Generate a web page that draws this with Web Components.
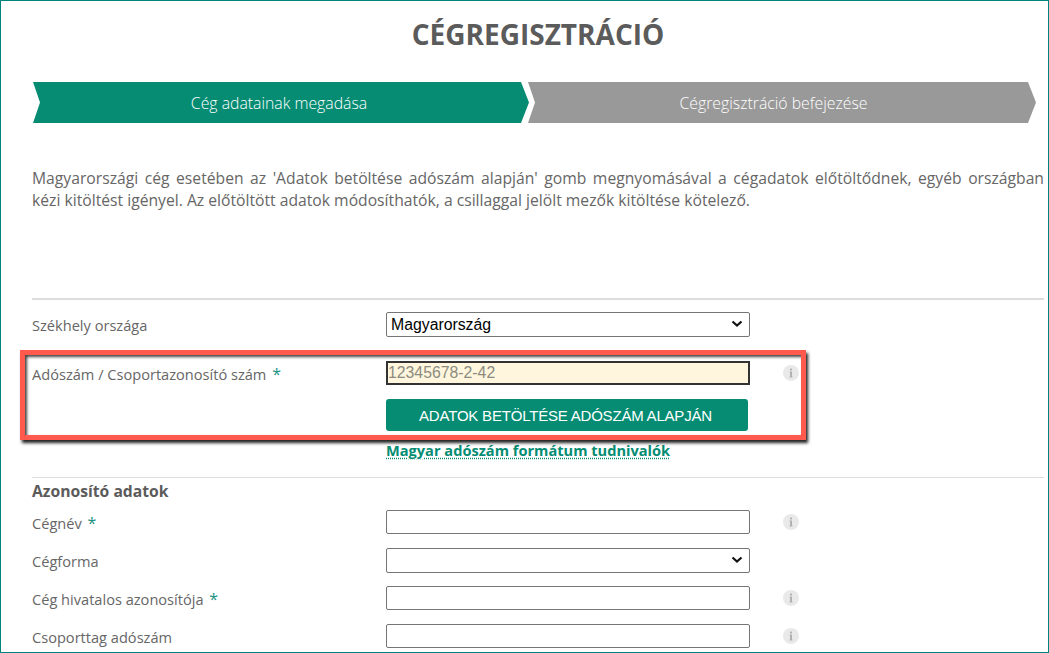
<!DOCTYPE html>
<html lang="hu">
<head>
<meta charset="utf-8">
<title>Cégregisztráció</title>
<style>
  html, body { margin: 0; padding: 0; background: #fff; }
  body { font-family: "Open Sans", "Liberation Sans", sans-serif; color: #666; }
</style>
</head>
<body>

<reg-page>
  <reg-steps>
    <reg-step active>Cég adatainak megadása</reg-step>
    <reg-step>Cégregisztráció befejezése</reg-step>
  </reg-steps>

  <p slot="intro">Magyarországi cég esetében az 'Adatok betöltése adószám alapján' gomb megnyomásával a cégadatok előtöltődnek, egyéb országban kézi&nbsp;kitöltést igényel. Az előtöltött adatok módosíthatók, a csillaggal jelölt mezők kitöltése kötelező.</p>

  <form-row tall label="Székhely országa" type="select" value="Magyarország"></form-row>
  <form-row label="Adószám / Csoportazonosító szám" required type="tax" value="12345678-2-42" info></form-row>
  <tax-actions></tax-actions>
  <form-section>Azonosító adatok</form-section>
  <form-row label="Cégnév" required info></form-row>
  <form-row label="Cégforma" type="select"></form-row>
  <form-row label="Cég hivatalos azonosítója" required info></form-row>
  <form-row label="Csoporttag adószám" info></form-row>

  <red-highlight></red-highlight>
</reg-page>

<script>
// Page frame with the title and the intro text
class RegPage extends HTMLElement {
  constructor() {
    super();
    this.attachShadow({ mode: 'open' });
    this.shadowRoot.innerHTML = `
      <style>
        :host {
          display: block;
          position: relative;
          box-sizing: border-box;
          height: 653px;
          padding: 0 4px 0 31px;
          border: 1px solid #00857c;
          overflow: hidden;
        }
        h1 {
          margin: 0;
          padding-top: 15px;
          font-size: 28px;
          line-height: 36px;
          font-weight: 700;
          text-align: center;
          color: #5b5b5b;
        }
        .intro { display: block; height: 175px; border-bottom: 2px solid #ddd; margin-bottom: 12px; }
        ::slotted(p) {
          margin: 0;
          padding-top: 44px;
          font-size: 15.7px;
          line-height: 22px;
          text-align: justify;
          color: #666;
        }
      </style>
      <h1>CÉGREGISZTRÁCIÓ</h1>
      <slot name="steps"></slot>
      <div class="intro"><slot name="intro"></slot></div>
      <slot></slot>
    `;
  }
}

class RegSteps extends HTMLElement {
  constructor() {
    super();
    this.attachShadow({ mode: 'open' });
    this.shadowRoot.innerHTML = `
      <style>
        :host {
          display: flex;
          margin: 30px 8px 0 1px;
          height: 41px;
        }
      </style>
      <slot></slot>
    `;
  }
  connectedCallback() {
    this.slot = 'steps';
  }
}

class RegStep extends HTMLElement {
  constructor() {
    super();
    this.attachShadow({ mode: 'open' });
    this.shadowRoot.innerHTML = `
      <style>
        :host {
          display: flex;
          flex: 1 1 0;
          align-items: center;
          justify-content: center;
          box-sizing: border-box;
          height: 41px;
          padding-right: 17px;
          font-size: 15.8px;
          font-weight: 300;
          color: #fff;
          background: #999;
          clip-path: polygon(0 0, calc(100% - 8px) 0, 100% 50%, calc(100% - 8px) 100%, 0 100%, 7px 50%);
        }
        :host([active]) {
          flex: 0 0 496px;
          margin-right: -1px;
          padding-right: 4px;
          background: #058c73;
        }
      </style>
      <slot></slot>
    `;
  }
}

// label + control + optional info mark
class FormRow extends HTMLElement {
  constructor() {
    super();
    this.attachShadow({ mode: 'open' });
  }

  connectedCallback() {
    const label = this.getAttribute('label') || '';
    const value = this.getAttribute('value') || '';
    const type = this.getAttribute('type') || 'text';
    const star = this.hasAttribute('required') ? '<span class="star">*</span>' : '';
    const info = this.hasAttribute('info') ? '<info-mark></info-mark>' : '';

    let control = `<input type="text" value="${value}">`;
    if (type === 'select') {
      control = `<select><option>${value}</option></select>
        <svg class="chev" width="12" height="8" viewBox="0 0 12 8" aria-hidden="true">
          <path d="M1.5 1.5L6 5.5L10.5 1.5" fill="none" stroke="#111" stroke-width="2.2"/>
        </svg>`;
    } else if (type === 'tax') {
      control = `<input class="tax" type="text" value="${value}">`;
    }

    this.shadowRoot.innerHTML = `
      <style>
        :host {
          display: grid;
          grid-template-columns: 354px 364px 33px 1fr;
          height: 38px;
          font-size: 14.6px;
          color: #666;
        }
        :host([tall]) { height: 49px; }
        .label { line-height: 26px; }
        .star { color: #1a9384; font-size: 16px; margin-left: 2px; }
        .control { position: relative; }
        input, select {
          box-sizing: border-box;
          display: block;
          width: 364px;
          height: 24px;
          margin: 0;
          padding: 1px 4px;
          font: 15.8px "Liberation Sans", Arial, sans-serif;
          color: #000;
          background: #fff;
          border: 1px solid #767676;
          border-radius: 2px;
          outline: none;
        }
        select {
          height: 25px;
          padding: 0 4px;
          appearance: none;
          -webkit-appearance: none;
        }
        .chev { position: absolute; left: 345px; top: 8px; pointer-events: none; }
        .tax {
          border: 2px solid #333;
          border-radius: 0;
          padding: 0;
          color: #8b8b80;
          background: #fff6dd;
        }
      </style>
      <div class="label">${label} ${star}</div>
      <div class="control">${control}</div>
      <div></div>
      <div>${info}</div>
    `;
  }
}

class InfoMark extends HTMLElement {
  constructor() {
    super();
    this.attachShadow({ mode: 'open' });
    this.shadowRoot.innerHTML = `
      <style>
        :host { display: block; width: 16px; height: 16px; margin-top: 4px; }
        svg { display: block; }
      </style>
      <svg width="16" height="16" viewBox="0 0 16 16" aria-hidden="true">
        <circle cx="8" cy="8" r="8" fill="#e9e9e9"/>
        <rect x="7" y="3.6" width="2" height="1.8" fill="#b0b0b0"/>
        <path d="M6.6 6.6H9V11.4H9.5V12.4H6.5V11.4H7.1V7.6H6.6Z" fill="#b0b0b0"/>
      </svg>
    `;
  }
}

// Load button and the tax number help link
class TaxActions extends HTMLElement {
  constructor() {
    super();
    this.attachShadow({ mode: 'open' });
    this.shadowRoot.innerHTML = `
      <style>
        :host {
          display: block;
          margin-left: 354px;
          height: 78px;
        }
        button {
          display: block;
          box-sizing: border-box;
          width: 362px;
          height: 32px;
          margin: 0;
          padding: 0 3px 0 0;
          border: 0;
          border-radius: 3px;
          background: #058c73;
          color: #fff;
          font: 15px "Liberation Sans", Arial, sans-serif;
          letter-spacing: -0.2px;
        }
        a {
          display: inline-block;
          margin-top: 10px;
          font-size: 14.6px;
          line-height: 18px;
          font-weight: 700;
          color: #058c73;
          text-decoration: underline dotted;
          text-underline-offset: 2px;
        }
      </style>
      <button type="button">ADATOK BETÖLTÉSE ADÓSZÁM ALAPJÁN</button>
      <a href="#">Magyar adószám formátum tudnivalók</a>
    `;
  }
}

class FormSection extends HTMLElement {
  constructor() {
    super();
    this.attachShadow({ mode: 'open' });
    this.shadowRoot.innerHTML = `
      <style>
        :host {
          display: block;
          box-sizing: border-box;
          height: 33px;
          border-top: 1px solid #ddd;
          padding-top: 2px;
          font-size: 15.7px;
          line-height: 22px;
          font-weight: 700;
          color: #5b5b5b;
        }
      </style>
      <slot></slot>
    `;
  }
}

// Red annotation rectangle drawn over the form
class RedHighlight extends HTMLElement {
  constructor() {
    super();
    this.attachShadow({ mode: 'open' });
    this.shadowRoot.innerHTML = `
      <style>
        :host {
          position: absolute;
          left: 19px;
          top: 349px;
          width: 786px;
          height: 90px;
          box-sizing: border-box;
          border: 5px solid #ff5a4d;
          box-shadow: 2px 3px 3px #222, inset 2px 2px 3px #444;
          pointer-events: none;
        }
      </style>
    `;
  }
}

customElements.define('reg-page', RegPage);
customElements.define('reg-steps', RegSteps);
customElements.define('reg-step', RegStep);
customElements.define('form-row', FormRow);
customElements.define('info-mark', InfoMark);
customElements.define('tax-actions', TaxActions);
customElements.define('form-section', FormSection);
customElements.define('red-highlight', RedHighlight);
</script>
</body>
</html>
